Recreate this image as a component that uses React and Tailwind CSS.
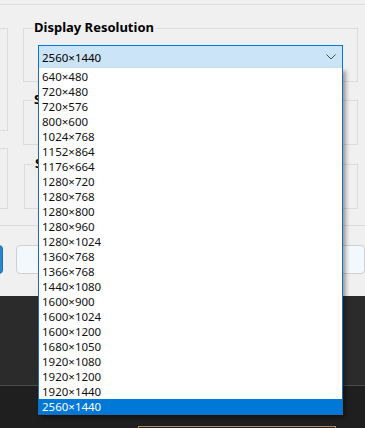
import React from 'react';

const RESOLUTIONS = [
  '640×480', '720×480', '720×576', '800×600', '1024×768', '1152×864',
  '1176×664', '1280×720', '1280×768', '1280×800', '1280×960', '1280×1024',
  '1360×768', '1366×768', '1440×1080', '1600×900', '1600×1024', '1600×1200',
  '1680×1050', '1920×1080', '1920×1200', '1920×1440', '2560×1440'
];

const SELECTED = '2560×1440';

function GroupBox({ title, className, children }) {
  return (
    <div className={`relative border border-[#dcdcdc] ${className}`}>
      {title && (
        <span className="absolute left-[9px] top-[-11px] bg-[#f0f0f0] px-px text-[13px] leading-[18px] font-bold text-black">
          {title}
        </span>
      )}
      {children}
    </div>
  );
}

export default function App() {
  return (
    <div
      className="relative w-[365px] h-[428px] overflow-hidden bg-[#1f1f1f]"
      style={{ fontFamily: '"Noto Sans", "Open Sans", sans-serif' }}
    >
      {/* Settings panel */}
      <div className="h-[296px] bg-[#f0f0f0] flex flex-col">
        <div className="mt-[4px] h-px bg-[#dcdcdc]" />

        <div className="mt-[23px] flex gap-[15px]">
          {/* left column, mostly cut off */}
          <div className="ml-[-20px] w-[28px] flex flex-col gap-[17px]">
            <GroupBox className="h-[103px]" />
            <GroupBox className="h-[61px]" />
          </div>

          {/* main column */}
          <div className="w-[335px] flex flex-col">
            <GroupBox title="Display Resolution" className="h-[54px]">
              <div className="mt-[16px] ml-[14px] w-[305px] h-[24px] border border-[#0078d7] bg-[#cce4f7] flex items-center justify-between pl-[3px] pr-[6px]">
                <span className="text-[11.5px] leading-[15px] text-black">{SELECTED}</span>
                <svg width="10" height="6" viewBox="0 0 10 6" fill="none">
                  <path d="M0.5 0.5 L5 5 L9.5 0.5" stroke="#4d4d4d" strokeWidth="1" />
                </svg>
              </div>
            </GroupBox>
            <GroupBox title="Scaling" className="mt-[18px] h-[45px]" />
            <GroupBox title="Scaling Mode" className="mt-[19px] ml-px h-[45px]" />
          </div>
        </div>

        <div className="mt-[16px] h-px bg-[#dcdcdc]" />

        {/* button row */}
        <div className="mt-[19px] flex gap-[13px]">
          <div className="ml-[-20px] w-[24px] h-[29px] rounded-[4px] bg-[#2a84d2] border border-[#1e6fb5]" />
          <div className="w-[360px] h-[29px] rounded-[4px] bg-[#f3f8fd] border border-[#d0d0d0]" />
        </div>
      </div>

      {/* dark lower area */}
      <div className="h-[89px] bg-[#2b2b2b]" />
      <div className="h-px bg-[#4a4a4a]" />
      <div className="flex pt-[40px] pl-[138px]">
        <div className="w-[198px] h-[10px] border border-[#b58d5e]" />
      </div>

      {/* open dropdown list */}
      <div className="absolute left-[38px] top-[68px] w-[305px] bg-white border border-t-0 border-[#1f6cb5] shadow-[3px_3px_4px_rgba(0,0,0,0.35)]">
        <ul className="pt-px">
          {RESOLUTIONS.map(r => (
            <li
              key={r}
              className={`h-[15px] pl-[3px] text-[11.5px] leading-[15px] ${
                r === SELECTED ? 'bg-[#0078d7] text-white' : 'text-[#111]'
              }`}
            >
              {r}
            </li>
          ))}
        </ul>
      </div>
    </div>
  );
}
